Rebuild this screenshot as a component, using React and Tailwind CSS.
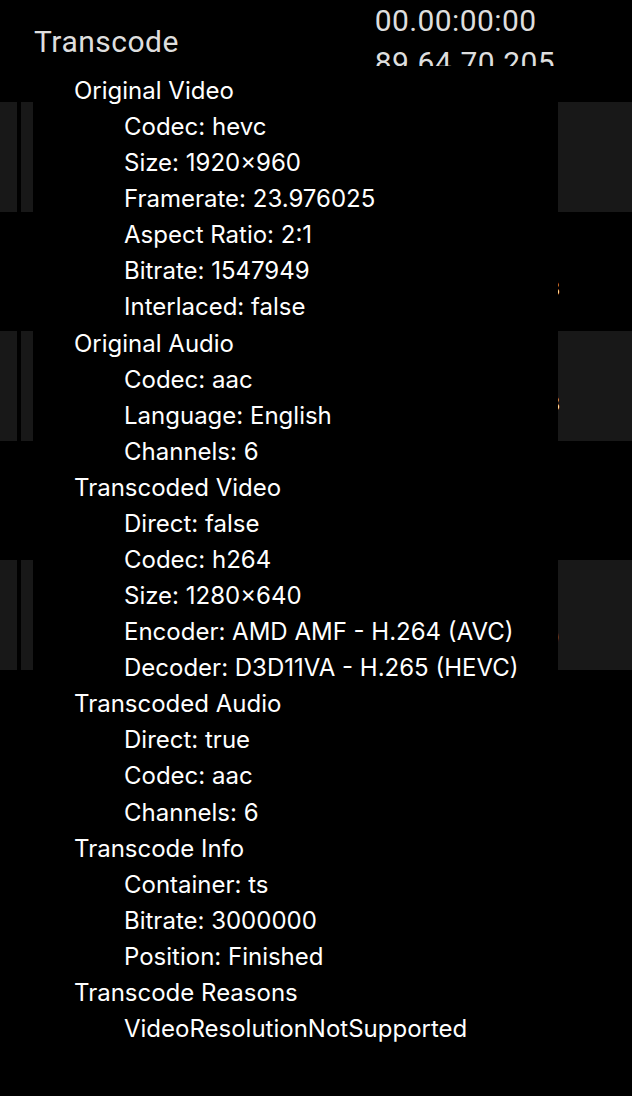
import React from 'react';

const sections = [
  {
    title: 'Original Video',
    items: ['Codec: hevc', 'Size: 1920×960', 'Framerate: 23.976025', 'Aspect Ratio: 2:1', 'Bitrate: 1547949', 'Interlaced: false'],
  },
  {
    title: 'Original Audio',
    items: ['Codec: aac', 'Language: English', 'Channels: 6'],
  },
  {
    title: 'Transcoded Video',
    items: ['Direct: false', 'Codec: h264', 'Size: 1280×640', 'Encoder: AMD AMF - H.264 (AVC)', 'Decoder: D3D11VA - H.265 (HEVC)'],
  },
  {
    title: 'Transcoded Audio',
    items: ['Direct: true', 'Codec: aac', 'Channels: 6'],
  },
  {
    title: 'Transcode Info',
    items: ['Container: ts', 'Bitrate: 3000000', 'Position: Finished'],
  },
  {
    title: 'Transcode Reasons',
    items: ['VideoResolutionNotSupported'],
  },
];

function Card({ peek, peekTop }) {
  return (
    <div className="flex h-[110px] gap-[4px]">
      <div className="w-[17px] bg-[#181818]" />
      <div className="flex-1 bg-[#181818]">
        {peek && (
          <div className={`w-[539px] text-right text-[20px] leading-[20px] text-white ${peekTop}`}>{peek}</div>
        )}
      </div>
    </div>
  );
}

export default function App() {
  return (
    <div className="relative min-h-[1096px] w-full overflow-hidden bg-black" style={{ fontFamily: 'Inter, "Noto Sans", sans-serif' }}>
      {/* page behind the popup */}
      <div style={{ fontFamily: 'Roboto, "Liberation Sans", sans-serif' }}>
        <div className="flex h-[84px] items-center pl-[34px] pr-[77px] text-[#dedede]">
          <div className="text-[30px] leading-none tracking-[0.5px]">Transcode</div>
          <div className="ml-auto text-[30px] leading-[42px] tracking-[0.4px]">
            <div>00.00:00:00</div>
            <div>89.64.70.205</div>
          </div>
        </div>
      </div>
      <div className="mt-[18px]">
        <Card />
        <div className="h-[119px]">
          <div className="w-[560px] pt-[67px] text-right text-[20px] leading-[20px] text-white">3</div>
        </div>
        <Card peek="3" peekTop="pt-[63px]" />
        <div className="h-[119px]" />
        <Card peek=")" peekTop="pt-[66px]" />
      </div>

      {/* stream info popup */}
      <div className="absolute left-[33px] right-[74px] top-[66px] bottom-0 bg-black pl-[41px] pt-[7px] text-[24px] leading-[36.08px] text-white">
        {sections.map((s) => (
          <div key={s.title}>
            <div>{s.title}</div>
            {s.items.map((it) => (
              <div key={it} className="pl-[50px]">
                {it}
              </div>
            ))}
          </div>
        ))}
      </div>
    </div>
  );
}
